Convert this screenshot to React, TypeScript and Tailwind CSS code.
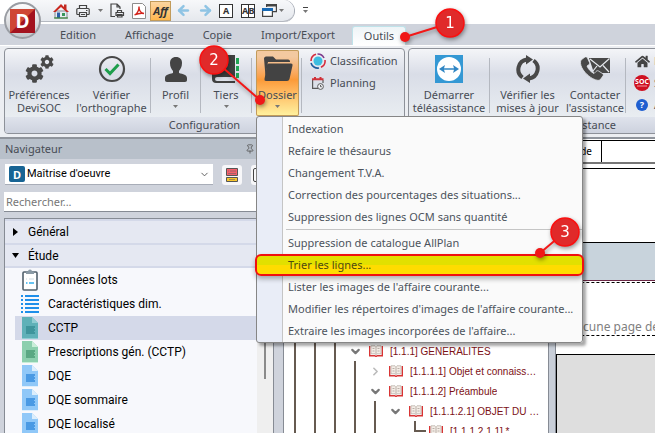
import type { ReactNode } from 'react'
import { ArrowLeft, ArrowRight, ChevronDown, ChevronRight, Pin } from 'lucide-react'
import { FaCog, FaHome } from 'react-icons/fa'

const TABS = ['Edition', 'Affichage', 'Copie', 'Import/Export']

const MENU_TOP = [
  'Indexation',
  'Refaire le thésaurus',
  'Changement T.V.A.',
  'Correction des pourcentages des situations...',
  'Suppression des lignes OCM sans quantité',
]

const MENU_BOTTOM = [
  'Suppression de catalogue AllPlan',
  'Trier les lignes...',
  "Lister les images de l'affaire courante...",
  "Modifier les répertoires d'images de l'affaire courante...",
  "Extraire les images incorporées de l'affaire...",
]

const NAV_ITEMS = [
  { label: 'Données lots', icon: <ClipboardIcon /> },
  { label: 'Caractéristiques dim.', icon: <LinesIcon /> },
  { label: 'CCTP', icon: <DocIcon page="#5fb1b8" fold="#8fcdd2" mark="#3f959c" />, selected: true },
  { label: 'Prescriptions gén. (CCTP)', icon: <DocIcon page="#8ccfae" fold="#c9eed9" mark="#5aa883" /> },
  { label: 'DQE', icon: <DocIcon page="#90c8f8" fold="#dceefc" mark="#4a9ae4" /> },
  { label: 'DQE sommaire', icon: <DocIcon page="#90c8f8" fold="#dceefc" mark="#4a9ae4" /> },
  { label: 'DQE localisé', icon: <DocIcon page="#90c8f8" fold="#dceefc" mark="#4a9ae4" /> },
]

// guides = vertical lines drawn left of the row
const TREE = [
  { guides: 3, label: '[1.1.1] GENERALITES', state: 'open' },
  { guides: 4, label: '[1.1.1.1] Objet et connaissance du projet', state: 'closed' },
  { guides: 4, label: '[1.1.1.2] Préambule', state: 'open' },
  { guides: 5, label: '[1.1.1.2.1] OBJET DU DOCUMENT', state: 'open' },
  { guides: 5, label: '[1.1.1.2.1.1] *', state: 'leaf' },
]

/* ---------- icons ---------- */

function DocIcon({ page, fold, mark }: { page: string; fold: string; mark: string }) {
  return (
    <svg width="16" height="22" viewBox="0 0 16 22">
      <path d="M0 0h10l6 6v16H0z" fill={page} />
      <path d="M10 0l6 6h-6z" fill={fold} />
      <path d="M4 9h9v2h-1v1h1v2h-1v1h1v2H4z" fill={mark} />
      <path d="M0 21h16v1H0z" fill={fold} />
    </svg>
  )
}

function ClipboardIcon() {
  return (
    <svg width="16" height="22" viewBox="0 0 16 22" fill="none">
      <rect x="1" y="3" width="14" height="18" rx="1" fill="#fff" stroke="#50606c" strokeWidth="1.6" />
      <path d="M4 2.5h2a2 2 0 0 1 4 0h2V5H4z" fill="#8a9aa6" />
      <path d="M4 10h1m2 0h5" stroke="#ccd8e0" />
      <path d="M4 14h1.5m1.5 0h5" stroke="#35b0ee" strokeWidth="1.6" />
    </svg>
  )
}

function LinesIcon() {
  return (
    <svg width="18" height="18" viewBox="0 0 18 18">
      <path d="M0 1h2m2 0h14M0 5h2m2 0h14M0 9h2m2 0h14M0 13h2m2 0h14M0 17h2m2 0h14" stroke="#1f8fea" strokeWidth="2" />
    </svg>
  )
}

function BookIcon() {
  return (
    <svg width="14" height="12" viewBox="0 0 14 12" fill="none">
      <path d="M.7 1v9.700h5L7 11.500l1.300-.8h5V1" stroke="#d83434" strokeWidth="1.400" />
      <path d="M2 .8h4l1 1 1-1h4v8H8l-1 1-1-1H2z" fill="#f4eee8" stroke="#b5aaa2" strokeWidth=".7" />
      <path d="M3.500 3.500h2M8.500 3.500h2M3.500 6h2M8.500 6h2M7 2v7" stroke="#a0958d" strokeWidth=".7" />
    </svg>
  )
}

function HouseIcon() {
  return (
    <svg width="16" height="16" viewBox="0 0 16 16">
      <path d="M2 8h12v7H2z" fill="#e8edf2" stroke="#6b7078" strokeWidth=".8" />
      <path d="M11 1.500h2.500v5H11z" fill="#c02a20" />
      <path d="M8 1L0 9h2.500L8 4l5.500 5H16z" fill="#c9271e" />
      <path d="M4 9.500h3V15H4z" fill="#2d5fa8" />
      <path d="M9 10h3v3H9z" fill="#39965a" />
      <path d="M1 15h14" stroke="#3f8a3c" strokeWidth="1.200" />
    </svg>
  )
}

function PrinterIcon() {
  return (
    <svg width="14" height="14" viewBox="0 0 14 14" fill="none" stroke="#444" strokeWidth="1.200">
      <path d="M3.500 4.500v-3h7v3M3.500 10.500h-2a.7.7 0 0 1-.7-.7V5.500c0-.6.4-1 1-1h10.400c.6 0 1 .4 1 1v4.300a.7.7 0 0 1-.7.7h-2" />
      <path d="M3.500 8.500h7v4h-7zM10 6.500h1.500M5 10.500h4" />
    </svg>
  )
}

function PreviewIcon() {
  return (
    <svg width="15" height="15" viewBox="0 0 15 15" fill="none" stroke="#444" strokeWidth="1.200">
      <path d="M5 13.500H1V1h6l3 3v2M7 1v3h3" />
      <path d="M7.500 9V7.500h4V9M6 12.500V9.500h7.500v3zM7.500 11.500h4.500v2.500H7.500z" />
    </svg>
  )
}

function PdfIcon() {
  return (
    <svg width="14" height="16" viewBox="0 0 14 16" fill="none">
      <path d="M.5.5h10l3 3v12H.5z" fill="#fff" stroke="#8c8c8c" />
      <path d="M2.500 12c3-1.500 4.500-5 4.500-8.500 0 4 2 6.500 5 7-3-.7-6 0-9.500 1.500z" stroke="#d3231c" strokeWidth="1.300" />
    </svg>
  )
}

function WindowsIcon() {
  return (
    <svg width="15" height="13" viewBox="0 0 15 13" fill="none">
      <path d="M4.600 3V.6h9.800v7H11" stroke="#444" strokeWidth="1.200" />
      <path d="M4 1.500h11" stroke="#444" strokeWidth="2" />
      <path d="M.6 4.500h9.800v7.900H.6z" fill="#fff" stroke="#444" strokeWidth="1.200" />
      <path d="M0 5.500h11" stroke="#1769b5" strokeWidth="3" />
    </svg>
  )
}

function LetterBox({ letters }: { letters: string[] }) {
  return (
    <span className="flex h-[14px] border border-[#333] bg-white">
      {letters.map((l, i) => (
        <span
          key={l}
          className={`flex items-center justify-center text-[9px] leading-none font-bold text-[#333] ${
            letters.length > 1 ? 'w-[6px]' : 'w-[12px]'
          } ${i > 0 ? 'border-l border-[#333]' : ''}`}
        >
          {l}
        </span>
      ))}
    </span>
  )
}

function GearsIcon() {
  return (
    <span className="relative block h-[28px] w-[29px] text-[#484848]">
      <FaCog size={19} className="absolute bottom-0 left-0" />
      <FaCog size={14} className="absolute top-0 right-0" />
    </span>
  )
}

function CheckIcon() {
  return (
    <svg width="28" height="28" viewBox="0 0 28 28" fill="none">
      <circle cx="14" cy="14" r="12" stroke="#484848" strokeWidth="2.200" />
      <path d="M7.500 14l4.500 4.500 8.500-9" stroke="#1d9e4b" strokeWidth="3" />
    </svg>
  )
}

function ProfileIcon() {
  return (
    <svg width="22" height="25" viewBox="0 0 22 25" fill="#444">
      <path d="M11 0c4 0 6 2.500 6 6 0 4-1.500 6-3 8v2c4 1 8 2 8 5v2c0 1.300-.7 2-2 2H2c-1.300 0-2-.7-2-2v-2c0-3 4-4 8-5v-2C6.500 12 5 10 5 6c0-3.500 2-6 6-6z" />
    </svg>
  )
}

function AddressBookIcon() {
  return (
    <svg width="28" height="28" viewBox="0 0 28 28">
      <path d="M4 0h19v22H5a2 2 0 0 0 0 4h18v2H4c-2.500 0-4-1.500-4-4V4c0-2.500 1.500-4 4-4z" fill="#404040" />
      <circle cx="12" cy="9" r="4" fill="#777" />
      <path d="M24 3h3v6h-3zM24 11h3v5h-3zM24 18h3v5h-3z" fill="#22a455" />
    </svg>
  )
}

function FolderIcon() {
  return (
    <svg width="30" height="26" viewBox="0 0 30 26" fill="#434343">
      <path d="M1 2.500C1 1.500 2 .5 3 .5h7l3 3h12c1.500 0 2 1 2 2V6H5L2.500 20z" />
      <path d="M5.500 7.500H28q2 0 1.500 2L26.500 23q-.5 2-2.500 2H3q-2 0-1.500-2L4 9q.3-1.500 1.500-1.500z" />
    </svg>
  )
}

function TeamViewerIcon() {
  return (
    <svg width="28" height="28" viewBox="0 0 28 28">
      <path d="M0 0h28v28H0z" fill="#3498d4" />
      <circle cx="14" cy="14" r="12" fill="#fff" />
      <path d="M4 14l6-4-1 3.300h10L18 10l6 4-6 4 1-3.300H9l1 3.300z" fill="#3086c4" />
    </svg>
  )
}

function RefreshIcon() {
  return (
    <svg width="24" height="28" viewBox="0 0 24 28" fill="none" stroke="#484848" strokeWidth="4">
      <path d="M6.500 22.500A10 10 0 0 1 11 4.500" />
      <path d="M17.500 5.500A10 10 0 0 1 13 23.500" />
      <path d="M10 0l7 4.500-7 5zM14 18.500l-7 5 7 4.500z" fill="#484848" stroke="none" />
    </svg>
  )
}

function ContactIcon() {
  return (
    <svg width="30" height="24" viewBox="0 0 30 24">
      <path d="M9 1h21v15H14z" fill="#484848" />
      <path d="M10 2l10 8 9.500-8.500M29 15l-6-6.500M13 14l4-5" stroke="#e6e9ee" strokeWidth="1.200" fill="none" />
      <path d="M1 3l4-3c1-.5 2 0 2.500 1l2 4.500c.3 1 0 2-1 2.500L7 9c1.500 3.500 4 6 7 7.500l2-2c.7-.8 1.700-1 2.500-.5l4 2.500c1 .7 1 1.700.5 2.500l-3 4C14 25.500-2.500 12 1 3z" fill="#484848" stroke="#e6e9ee" strokeWidth=".8" />
    </svg>
  )
}

function ClassificationIcon() {
  return (
    <svg width="16" height="16" viewBox="0 0 16 16" fill="none" strokeWidth="1.600">
      <circle cx="8" cy="8" r="4.500" fill="#3dbde0" />
      <path d="M1 8a7 7 0 0 1 5-6.700" stroke="#d42a3c" />
      <path d="M7.500 1A7 7 0 0 1 14 5" stroke="#7d3b8c" />
      <path d="M15 7a7 7 0 0 1-4 7.300" stroke="#d42a3c" />
      <path d="M9 15a7 7 0 0 1-8-5" stroke="#1d5b9c" />
    </svg>
  )
}

function PlanningIcon() {
  return (
    <svg width="12" height="13" viewBox="0 0 12 13" fill="none">
      <path d="M.6 3v8.400H6M11 3v3" stroke="#5a5a5a" strokeWidth="1.200" />
      <path d="M0 2.200h11.500M3 0v3M8.500 0v3" stroke="#d03038" strokeWidth="2" />
      <circle cx="8.500" cy="9.500" r="2.900" fill="#eef0f4" stroke="#5a5a5a" />
      <path d="M8.500 8v1.700h1.300" stroke="#5a5a5a" />
    </svg>
  )
}

function SocIcon() {
  return (
    <svg width="16" height="16" viewBox="0 0 16 16">
      <circle cx="8" cy="8" r="8" fill="#cf1020" />
      <text x="8" y="9" textAnchor="middle" fontSize="7" fontWeight="700" fill="#fff">SOC</text>
      <path d="M3 11h10" stroke="#f09aa0" />
    </svg>
  )
}

function HelpIcon() {
  return (
    <svg width="12" height="12" viewBox="0 0 12 12">
      <circle cx="6" cy="6" r="6" fill="#1f5fd0" />
      <text x="6" y="9" textAnchor="middle" fontSize="9" fontWeight="700" fill="#fff">?</text>
    </svg>
  )
}

function Caret() {
  return (
    <svg width="5" height="3" viewBox="0 0 5 3">
      <path d="M0 0h5L2.500 3z" fill="#777" />
    </svg>
  )
}

/* ---------- ribbon ---------- */

function Divider() {
  return <div className="mt-2 h-[55px] w-px shrink-0 bg-[#b4b8c0]" />
}

function BigButton({ icon, label, caret, className }: { icon: ReactNode; label: string; caret?: boolean; className: string }) {
  return (
    <button className={`flex h-[66px] shrink-0 flex-col items-center text-[11px] leading-[13px] ${className}`}>
      <span className="flex h-[38px] items-center justify-center">{icon}</span>
      <span className="whitespace-pre">{label}</span>
      {caret && (
        <span className="flex h-[11px] items-center">
          <Caret />
        </span>
      )}
    </button>
  )
}

function SmallButton({ icon, label }: { icon: ReactNode; label: string }) {
  return (
    <button className="flex h-[22px] items-center gap-1 text-[11px] whitespace-nowrap">
      <span className="flex w-4 justify-center">{icon}</span>
      {label}
    </button>
  )
}

function Group({ title, className, children }: { title: string; className: string; children: ReactNode }) {
  return (
    <section className={`flex shrink-0 flex-col rounded-[4px] border border-[#8d9199] bg-linear-to-b from-[#f4f5f8] via-[#d9dde7] via-30% to-[#eff3f5] ${className}`}>
      <div className="flex h-[68px] pt-px">{children}</div>
      <h2 className="h-4 rounded-b-[3px] bg-linear-to-b from-[#dfe3ec] to-[#cdd2de] text-center text-[11px] leading-4">{title}</h2>
    </section>
  )
}

function MenuItem({ label }: { label: string }) {
  const active = label === 'Trier les lignes...'
  return (
    <button
      role="menuitem"
      className={
        active
          ? 'relative -mx-[2px] flex h-[22px] items-center rounded-[6px] border-2 border-[#f01010] bg-linear-to-b from-[#e2e000] from-50% to-[#ffdc00] to-50% pl-[31px] whitespace-nowrap text-[#4d4a10] shadow-[0_3px_5px_rgba(0,0,0,0.3)]'
          : 'flex h-[22px] items-center pl-[31px] whitespace-nowrap'
      }
    >
      {label}
    </button>
  )
}

function DossierMenu() {
  return (
    <div
      role="menu"
      className="absolute top-full left-0 z-20 flex w-[327px] flex-col rounded-[3px] border border-[#868686] bg-[linear-gradient(to_right,#e9edf7_25px,#c5c5c5_25px,#c5c5c5_26px,#fafafa_26px)] pt-px text-[11px] text-[#4c535c] shadow-[3px_3px_3px_rgba(0,0,0,0.35)]"
    >
      {MENU_TOP.map((l) => (
        <MenuItem key={l} label={l} />
      ))}
      <div className="my-[1px] ml-[29px] h-[2px] border-t border-[#c5c5c5]" />
      {MENU_BOTTOM.map((l) => (
        <MenuItem key={l} label={l} />
      ))}
    </div>
  )
}

function Ribbon() {
  return (
    <div className="z-10 flex shrink-0 gap-[3px] border-t border-white bg-[#eceef2] pt-[2px] pb-[3px] pl-1 text-[#474c55]">
      <Group title="Configuration" className="w-[401px]">
        <BigButton icon={<GearsIcon />} label={'Préférences\nDeviSOC'} className="w-[68px]" />
        <BigButton icon={<CheckIcon />} label={"Vérifier\nl'orthographe"} className="w-[77px]" />
        <Divider />
        <BigButton icon={<ProfileIcon />} label="Profil" caret className="w-[49px]" />
        <Divider />
        <BigButton icon={<AddressBookIcon />} label="Tiers" caret className="w-[50px]" />
        <Divider />
        <div className="relative ml-1 h-[66px] shrink-0">
          <BigButton
            icon={<FolderIcon />}
            label="Dossier"
            caret
            className="w-[43px] rounded-[2px] bg-linear-to-b from-[#f3c9a0] from-10% via-[#fb9a38] via-45% to-[#fff3a0] shadow-[inset_0_0_0_1px_#c29b5a]"
          />
          <DossierMenu />
        </div>
        <div className="ml-[2px] flex">
          <Divider />
        </div>
        <div className="ml-2 flex flex-col">
          <SmallButton icon={<ClassificationIcon />} label="Classification" />
          <SmallButton icon={<PlanningIcon />} label="Planning" />
        </div>
      </Group>
      <Group title="Assistance" className="w-[362px]">
        <BigButton icon={<TeamViewerIcon />} label={'Démarrer\ntéléassistance'} className="w-[80px]" />
        <Divider />
        <BigButton icon={<RefreshIcon />} label={'Vérifier les\nmises à jour'} className="w-[75px]" />
        <BigButton icon={<ContactIcon />} label={"Contacter\nl'assistance"} className="w-[60px]" />
        <Divider />
        <div className="ml-2 flex flex-col">
          <SmallButton icon={<FaHome size={15} color="#444" />} label="Espace client" />
          <SmallButton icon={<SocIcon />} label="Site SOC" />
          <SmallButton icon={<HelpIcon />} label="À propos" />
        </div>
      </Group>
    </div>
  )
}

function TitleBar() {
  return (
    <header className="relative shrink-0">
      <div className="flex h-6 bg-white pl-5">
        <div className="flex h-[22px] items-center rounded-r-full border-b border-[#b4b8c0] bg-linear-to-b from-[#f7f8fa] to-[#e5e8ed] pr-[10px] pl-[33px] shadow-[1px_0_0_#a6abb5]">
          <button aria-label="Accueil"><HouseIcon /></button>
          <button aria-label="Imprimer" className="ml-[7px]"><PrinterIcon /></button>
          <span className="ml-2"><Caret /></span>
          <button aria-label="Aperçu" className="ml-[7px]"><PreviewIcon /></button>
          <button aria-label="PDF" className="ml-[7px]"><PdfIcon /></button>
          <button className="ml-1 h-[20px] w-[21px] border border-[#c29b5a] bg-linear-to-b from-[#fbd5a0] to-[#ffb84d] font-['Open_Sans'] text-[11px] leading-4 font-bold text-[#333] italic">
            Aff
          </button>
          <button aria-label="Précédent" className="ml-[5px]"><ArrowLeft size={15} strokeWidth={4} color="#8fc4e4" /></button>
          <button aria-label="Suivant" className="ml-[7px]"><ArrowRight size={15} strokeWidth={4} color="#8fc4e4" /></button>
          <button className="ml-[6px]"><LetterBox letters={['A']} /></button>
          <button className="ml-2"><LetterBox letters={['A', 'B']} /></button>
          <button aria-label="Fenêtres" className="ml-[7px]"><WindowsIcon /></button>
          <span className="ml-[2px]"><Caret /></span>
        </div>
        <button aria-label="Personnaliser" className="ml-[9px] flex flex-col items-center justify-center gap-[2px] pb-1">
          <span className="h-px w-[5px] bg-[#444]" />
          <Caret />
        </button>
      </div>
      <nav className="flex h-[21px] bg-[#cfd3dc] pl-[60px] text-[11px] text-[#474c55]">
        {TABS.map((t) => (
          <button key={t} className="mr-[29px] pt-[2px]">
            {t}
          </button>
        ))}
        <button className="mt-[2px] -ml-[12px] w-[54px] rounded-t-[3px] border border-b-0 border-[#bfe3ea] bg-linear-to-b from-[#eef4f7] to-white">
          Outils
        </button>
      </nav>
      <div className="absolute top-[2px] left-1 z-20 flex size-[37px] items-center justify-center rounded-full border-2 border-[#9a9da3] bg-linear-to-b from-[#fdfdfd] to-[#c4c7cc]">
        <svg width="25" height="24" viewBox="0 0 25 24">
          <path d="M0 0h25v24H0z" fill="#a3131f" />
          <path d="M0 0h25L0 24z" fill="#cf4634" />
          <text x="12.500" y="18.500" textAnchor="middle" fontSize="19" fontWeight="700" fill="#fff" fontFamily="Open Sans">
            D
          </text>
        </svg>
      </div>
    </header>
  )
}

/* ---------- panels ---------- */

function Navigator() {
  return (
    <aside className="flex w-[273px] shrink-0 flex-col bg-[#cfd3dc]">
      <div className="flex h-[20px] shrink-0 items-center bg-[#b8c0ca] pr-[18px] pl-[5px] text-[11px] text-[#474c55]">
        <h2 className="flex-1">Navigateur</h2>
        <Pin size={10} color="#555" />
      </div>
      <div className="flex shrink-0 items-center gap-[9px] pt-[5px] pl-[5px]">
        <div className="flex h-[21px] w-[208px] shrink-0 items-center border-b border-[#a8adb8] bg-white pr-[3px] pl-1">
          <span className="flex size-4 shrink-0 items-center justify-center rounded-[2px] bg-[#186494] text-[11px] leading-none font-bold text-white">D</span>
          <select aria-label="Module" className="ml-[2px] flex-1 appearance-none bg-transparent font-['Roboto'] text-[11px] text-black">
            <option>Maîtrise d'oeuvre</option>
          </select>
          <ChevronDown size={11} color="#555" />
        </div>
        <button aria-label="Vue" className="flex size-5 shrink-0 items-center justify-center rounded-[3px] bg-[#f7f7f9]">
          <svg width="12" height="14" viewBox="0 0 12 14">
            <path d="M.5.5h11v7H.5z" fill="#f4606c" stroke="#555" />
            <path d="M.5 9.500h11v4H.5z" fill="#f8c62c" stroke="#555" />
            <path d="M2 3h1m1 0h6M2 5.500h8M3 11.500h6" stroke="#666" strokeWidth=".6" />
          </svg>
        </button>
        <button aria-label="Liste" className="flex h-5 flex-1 items-center rounded-l-[3px] bg-[#f7f7f9] pl-[2px]">
          <span className="h-[14px] w-3 rounded-[2px] border border-[#444]" />
        </button>
      </div>
      <input
        aria-label="Rechercher"
        placeholder="Rechercher..."
        className="mt-[7px] ml-1 h-[20px] shrink-0 border-b border-[#868b94] bg-white px-[2px] text-[11px] placeholder:text-[#777]"
      />
      <div className="mt-[6px] ml-1 flex min-h-0 flex-1 border-t border-l border-[#868b94] font-['Roboto'] text-[12px] text-black">
        <div className="min-w-0 flex-1 overflow-hidden bg-[#f7f8fc]">
          <button className="flex h-[26px] w-full items-center border-y-2 border-[#d4d9e9] bg-[#e5e8f2] pl-2">
            <svg width="5" height="8" viewBox="0 0 5 8"><path d="M0 0l5 4-5 4z" /></svg>
            <span className="ml-[10px]">Général</span>
          </button>
          <button className="flex h-[23px] w-full items-center border-b-2 border-[#d4d9e9] bg-[#e5e8f2] pl-[7px]">
            <svg width="7" height="5" viewBox="0 0 7 5"><path d="M0 0h7L3.500 5z" /></svg>
            <span className="ml-[9px]">Étude</span>
          </button>
          <ul>
            {NAV_ITEMS.map(({ label, icon, selected }) => (
              <li key={label} className={`ml-[10px] flex h-6 items-center gap-[9px] pl-[6px] ${selected ? 'bg-[#d4d9e9]' : ''}`}>
                <span className="flex w-[18px] justify-center">{icon}</span>
                {label}
              </li>
            ))}
          </ul>
        </div>
        <div className="flex w-4 shrink-0 justify-center bg-[#efefef]">
          <div className="h-[160px] w-[2px] bg-[#8a8a8a]" />
        </div>
      </div>
    </aside>
  )
}

function Tree() {
  return (
    <div className="w-[264px] shrink-0 overflow-hidden bg-white pt-[202px] font-['Liberation_Sans'] text-[10px] text-[#7c1014]">
      {TREE.map(({ guides, label, state }) => (
        <div key={label} className="flex h-5 items-center">
          {Array.from({ length: guides }, (_, i) => (
            <span key={i} className="ml-[10px] h-full w-[10px] shrink-0 border-l-2 border-[#665a50]" />
          ))}
          {state === 'leaf' ? (
            <span className="ml-[30px] h-[11px] w-3 shrink-0 self-start border-b-2 border-l-2 border-[#665a50]" />
          ) : (
            <button aria-label="Développer" className="flex w-[22px] shrink-0 justify-center">
              {state === 'open' ? (
                <ChevronDown size={13} strokeWidth={4} color="#777" />
              ) : (
                <ChevronRight size={13} strokeWidth={3} color="#bbb" />
              )}
            </button>
          )}
          <span className="ml-[3px] shrink-0">
            <BookIcon />
          </span>
          <span className="mr-2 ml-[7px] truncate">{label}</span>
        </div>
      ))}
    </div>
  )
}

function PageView() {
  return (
    <main className="flex min-w-0 flex-1 flex-col overflow-hidden bg-white pt-px">
      <div className="flex h-[24px] shrink-0 border-t border-b-2 border-t-black border-b-[#777] text-[10px] text-black">
        <span className="w-[46px] shrink-0 border-r border-black pr-[9px] text-right leading-5">de</span>
      </div>
      <div className="mt-1 h-[75px] shrink-0 border-y border-black" />
      <div className="h-[38px] shrink-0 border-b border-[#6b2745] bg-[#c8d3dc]" />
      <div className="mt-px flex h-[54px] shrink-0 items-end border-y border-dashed border-black pl-[12px] text-[12px] leading-4 whitespace-nowrap text-[#808080]">
        Aucune page de garde
      </div>
      <div className="mt-[18px] flex-1 border-t border-l border-black bg-[#dedede]" />
    </main>
  )
}

const CALLOUTS = [
  { n: 1, x: 450, y: 23, tx: 405, ty: 37 },
  { n: 2, x: 214, y: 60, tx: 260, ty: 100 },
  { n: 3, x: 565, y: 232, tx: 540, ty: 253 },
]

function Callouts() {
  return (
    <svg width="655" height="433" className="pointer-events-none absolute top-0 left-0 z-30 drop-shadow-[1px_2px_2px_rgba(0,0,0,0.4)]">
      {CALLOUTS.map(({ n, x, y, tx, ty }) => (
        <g key={n}>
          <path d={`M${x} ${y}L${tx} ${ty}`} stroke="#f21818" strokeWidth="2" />
          <circle cx={tx} cy={ty} r="5" fill="#f01818" />
          <circle cx={x} cy={y} r="14" fill="#e02a2a" stroke="#fa1010" strokeWidth="1.500" />
          <text x={x} y={y + 5} textAnchor="middle" fontSize="15" fill="#fff" fontFamily="DejaVu Sans">
            {n}
          </text>
        </g>
      ))}
    </svg>
  )
}

export default function App() {
  return (
    <div className="relative flex h-screen flex-col overflow-hidden bg-[#cfd3dc] font-['Noto_Sans',sans-serif]">
      <TitleBar />
      <Ribbon />
      <div className="h-[2px] shrink-0 bg-[#8f949c]" />
      <div className="flex min-h-0 flex-1">
        <Navigator />
        <div className="w-[11px] shrink-0 border-x border-[#868b94] bg-[#cfd3dc]" />
        <Tree />
        <div className="w-2 shrink-0 border-x border-[#868b94] bg-[#c8ced8]" />
        <PageView />
      </div>
      <Callouts />
    </div>
  )
}
